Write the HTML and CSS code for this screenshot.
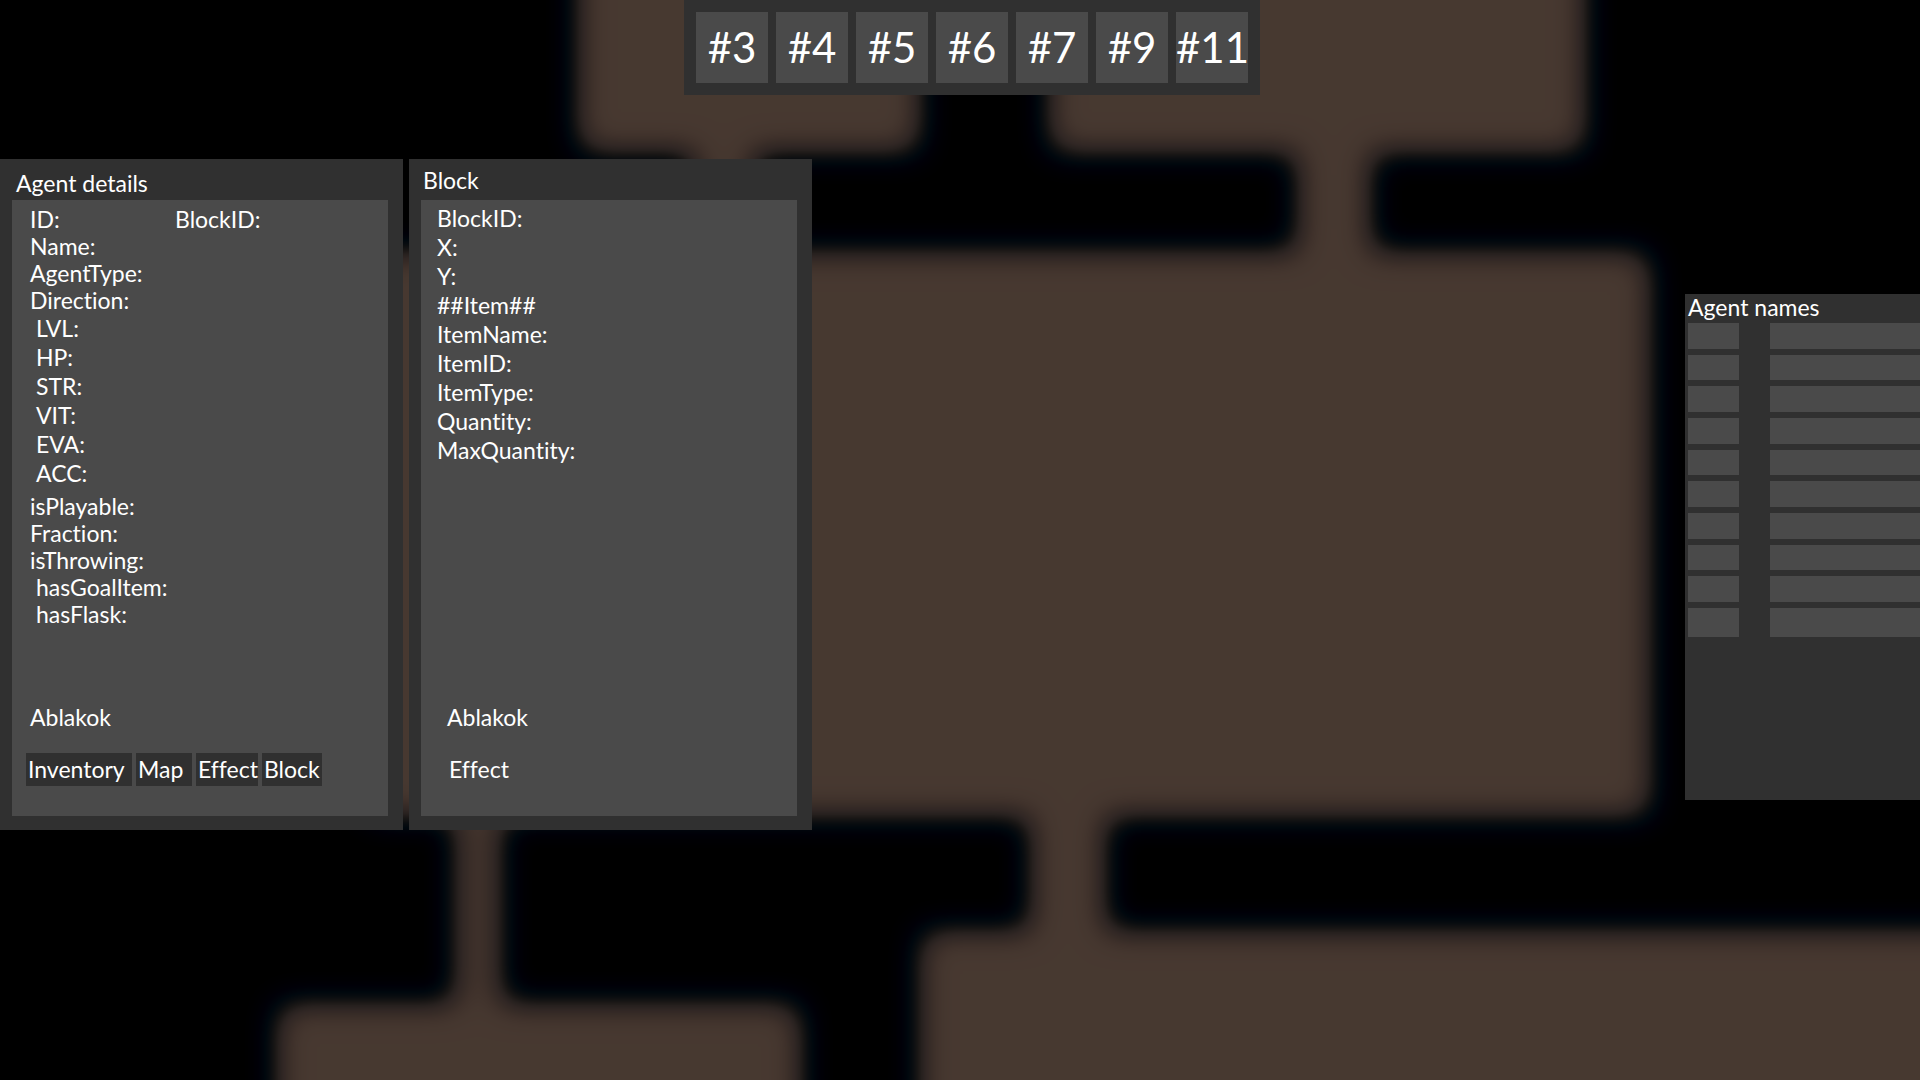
FILE: index.html
```html
<!DOCTYPE html>
<html lang="en">
<head>
<meta charset="utf-8">
<title>Agent view</title>
<link rel="stylesheet" href="styles.css">
</head>
<body>
<svg class="map" viewBox="0 0 1920 1080" preserveAspectRatio="xMidYMid slice" aria-hidden="true">
  <defs>
    <!-- softens the rooms, then tints the falloff from brown to a cold dark rim -->
    <filter id="fog" filterUnits="userSpaceOnUse" x="-80" y="-80" width="2080" height="1240" color-interpolation-filters="sRGB">
      <feGaussianBlur stdDeviation="17"/>
      <feComponentTransfer>
        <feFuncR type="table" tableValues="0 0 0 .045 .1 .155 .195 .22 .25 .27 .282"/>
        <feFuncG type="table" tableValues="0 0 .03 .055 .09 .13 .155 .175 .195 .214 .224"/>
        <feFuncB type="table" tableValues="0 .03 .055 .065 .085 .122 .145 .155 .17 .184 .192"/>
      </feComponentTransfer>
    </filter>
  </defs>
  <g filter="url(#fog)">
    <rect x="-80" y="-80" width="2080" height="1240" fill="#000"/>
    <g fill="#fff">
      <rect x="580" y="-80" width="338" height="230"/>
      <rect x="698" y="140" width="52" height="120"/>
      <rect x="1051" y="-80" width="532" height="230"/>
      <rect x="1300" y="140" width="68" height="120"/>
      <rect x="370" y="254" width="1278" height="560"/>
      <rect x="458" y="806" width="40" height="208"/>
      <rect x="279" y="1006" width="520" height="160"/>
      <rect x="1033" y="806" width="70" height="140"/>
      <rect x="922" y="933" width="1080" height="240"/>
    </g>
  </g>
</svg>

<div class="screen">
  <header class="top">
    <nav class="slots" aria-label="Agents">
      <button class="slot" type="button">#3</button>
      <button class="slot" type="button">#4</button>
      <button class="slot" type="button">#5</button>
      <button class="slot" type="button">#6</button>
      <button class="slot" type="button">#7</button>
      <button class="slot" type="button">#9</button>
      <button class="slot" type="button">#11</button>
    </nav>
  </header>

  <main class="windows">
    <section class="panel">
      <h2 class="panel-title">Agent details</h2>
      <div class="panel-body">
        <ul class="fields">
          <li class="pair"><span>ID:</span><span>BlockID:</span></li>
          <li>Name:</li>
          <li>AgentType:</li>
          <li>Direction:</li>
        </ul>
        <ul class="fields stats">
          <li>LVL:</li>
          <li>HP:</li>
          <li>STR:</li>
          <li>VIT:</li>
          <li>EVA:</li>
          <li>ACC:</li>
        </ul>
        <ul class="fields flags">
          <li>isPlayable:</li>
          <li>Fraction:</li>
          <li>isThrowing:</li>
          <li class="sub">hasGoalItem:</li>
          <li class="sub">hasFlask:</li>
        </ul>
        <div class="links">
          <h3 class="links-title">Ablakok</h3>
          <div class="link-row">
            <button class="tab inventory" type="button">Inventory</button>
            <button class="tab map-tab" type="button">Map</button>
            <button class="tab" type="button">Effect</button>
            <button class="tab" type="button">Block</button>
          </div>
        </div>
      </div>
    </section>

    <section class="panel">
      <h2 class="panel-title block-title">Block</h2>
      <div class="panel-body block-body">
        <ul class="fields block-fields">
          <li>BlockID:</li>
          <li>X:</li>
          <li>Y:</li>
          <li>##Item##</li>
          <li>ItemName:</li>
          <li>ItemID:</li>
          <li>ItemType:</li>
          <li>Quantity:</li>
          <li>MaxQuantity:</li>
        </ul>
        <div class="links block-links">
          <h3 class="links-title">Ablakok</h3>
          <div class="link-row">
            <button class="tab plain" type="button">Effect</button>
          </div>
        </div>
      </div>
    </section>

    <aside class="names">
      <h2 class="names-title">Agent names</h2>
      <ol class="name-list">
        <li><span></span><span></span></li>
        <li><span></span><span></span></li>
        <li><span></span><span></span></li>
        <li><span></span><span></span></li>
        <li><span></span><span></span></li>
        <li><span></span><span></span></li>
        <li><span></span><span></span></li>
        <li><span></span><span></span></li>
        <li><span></span><span></span></li>
        <li><span></span><span></span></li>
      </ol>
    </aside>
  </main>
</div>
</body>
</html>
```
FILE: styles.css
```css
* {
  box-sizing: border-box;
}

body {
  margin: 0;
  min-height: 100vh;
  overflow: hidden;
  background: #000;
  color: #fff;
  font: 23px/27px Lato, "Noto Sans", sans-serif;
  font-variant-ligatures: none;
}

h2,
h3,
ul,
ol {
  margin: 0;
  padding: 0;
  font-size: inherit;
  font-weight: 400;
  list-style: none;
}

button {
  border: 0;
  color: inherit;
  font: inherit;
  font-variant-ligatures: none;
  cursor: pointer;
}

/* dungeon map behind the windows */
.map {
  position: absolute;
  inset: 0;
  width: 100%;
  height: 100%;
}

.screen {
  position: relative;
  display: flex;
  flex-direction: column;
  gap: 64px;
}

.top {
  display: flex;
  justify-content: center;
  padding-left: 24px;
}

.slots {
  display: flex;
  gap: 8px;
  padding: 12px;
  background: #303030;
}

.slot {
  width: 72px;
  height: 71px;
  padding: 0;
  background: #4a4a4a;
  font-size: 42px;
  line-height: 71px;
}

.windows {
  display: flex;
  align-items: flex-start;
  gap: 6px;
}

.panel {
  display: flex;
  flex-direction: column;
  width: 403px;
  padding: 0 15px 14px 12px;
  background: #303030;
}

.panel-title {
  padding: 11px 4px 3px;
}

.block-title {
  padding: 8px 2px 6px;
}

.panel-body {
  display: flex;
  flex-direction: column;
  min-height: 616px;
  padding: 6px 14px 30px;
  background: #4a4a4a;
}

.block-body {
  padding-top: 4px;
}

.fields {
  padding-left: 4px;
}

.pair {
  display: grid;
  grid-template-columns: 145px 1fr;
}

.stats {
  padding-left: 10px;
  line-height: 29px;
}

.flags {
  padding-top: 5px;
}

.sub {
  padding-left: 6px;
}

.block-fields {
  padding-left: 2px;
  line-height: 29px;
}

.links {
  display: flex;
  flex-direction: column;
  gap: 22px;
  margin-top: auto;
}

.links-title {
  padding-left: 4px;
}

.link-row {
  display: flex;
  gap: 4px;
}

.tab {
  min-width: 60px;
  height: 33px;
  padding: 0 0 0 2px;
  background: #303030;
  line-height: 33px;
  text-align: left;
}

.inventory {
  width: 106px;
}

.map-tab {
  min-width: 56px;
}

.block-links {
  padding-left: 8px;
}

.plain {
  padding: 0 6px;
  background: none;
}

.names {
  width: 235px;
  min-height: 506px;
  margin: 135px 0 0 auto;
  padding-left: 3px;
  background: #303030;
}

.names-title {
  padding-bottom: 2px;
}

.name-list {
  display: grid;
  grid-template-rows: repeat(9, 1fr) 29px;
  gap: 6px;
  height: 314px;
}

.name-list li {
  display: grid;
  grid-template-columns: 51px 1fr;
  gap: 31px;
}

.name-list span {
  background: #4a4a4a;
}
```
